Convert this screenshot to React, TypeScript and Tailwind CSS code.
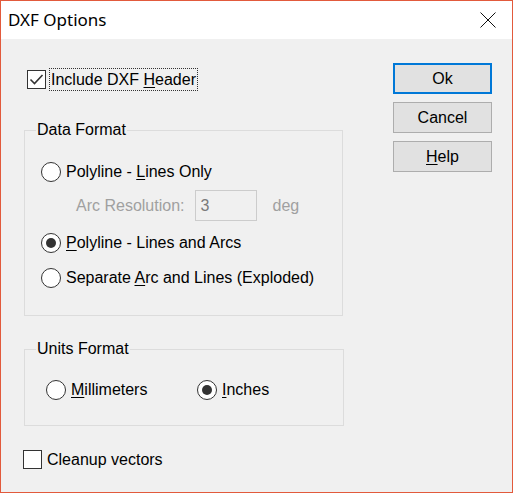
const font = { fontFamily: '"Liberation Sans", Arial, sans-serif' }

function CheckBox({ checked }: { checked: boolean }) {
  return (
    <span className="flex h-[19px] w-[19px] shrink-0 items-center justify-center border border-[#333333] bg-white">
      {checked && (
        <svg width="15" height="15" viewBox="0 0 15 15" aria-hidden>
          <path d="M1.5 7.5 L5.5 11.5 L13.5 3" fill="none" stroke="#333333" strokeWidth="1.6" />
        </svg>
      )}
    </span>
  )
}

function Radio({ checked }: { checked: boolean }) {
  return (
    <span className="flex h-[20px] w-[20px] shrink-0 items-center justify-center rounded-full border border-[#333333] bg-white">
      {checked && <span className="h-[10px] w-[10px] rounded-full bg-[#333333]" />}
    </span>
  )
}

function RadioRow({
  checked,
  children,
  className = '',
}: {
  checked: boolean
  children: React.ReactNode
  className?: string
}) {
  return (
    <div className={`flex h-[20px] items-center gap-[5px] ${className}`}>
      <Radio checked={checked} />
      <span className="leading-none">{children}</span>
    </div>
  )
}

function Btn({ children, primary }: { children: React.ReactNode; primary?: boolean }) {
  return (
    <button
      type="button"
      className={`flex h-[31px] w-[99px] items-center justify-center bg-[#e1e1e1] text-[16px] text-black ${
        primary ? 'border-2 border-[#0078d7]' : 'border border-[#adadad]'
      }`}
    >
      {children}
    </button>
  )
}

export default function App() {
  return (
    <div
      className="flex h-[493px] w-[513px] flex-col border border-[#e25a3c] text-[16px] text-black"
      style={font}
    >
      <header className="flex h-[38px] shrink-0 items-center justify-between bg-white pl-[7px] pr-[16px]">
        <span className="text-[17px]" style={{ fontFamily: '"Noto Sans", "Liberation Sans", sans-serif' }}>
          DXF Options
        </span>
        <svg width="16" height="16" viewBox="0 0 16 16" aria-hidden>
          <path d="M0.5 0.5 L15.5 15.5 M15.5 0.5 L0.5 15.5" stroke="#111111" strokeWidth="1" />
        </svg>
      </header>

      <div className="flex flex-1 bg-[#f0f0f0]">
        <div className="w-[392px] pl-[21px]">
          <div className="ml-[5px] mt-[29px] flex h-[23px] items-center gap-[3px]">
            <CheckBox checked />
            <span className="block h-[23px] border border-dotted border-[#333333] px-[1px] leading-[21px]">
              Include DXF <span className="underline underline-offset-2">H</span>eader
            </span>
          </div>

          <fieldset className="ml-[2px] mt-[30px] h-[195px] w-[319px] border border-[#dcdcdc]">
            <legend className="ml-[11px] px-[1px] leading-[18px]">Data Format</legend>
            <div className="pl-[16px]">
              <RadioRow checked={false} className="mt-[23px]">
                Polyline - <span className="underline underline-offset-2">L</span>ines Only
              </RadioRow>
              <div className="mt-[8px] flex h-[31px] items-center text-[#a0a0a0]">
                <span className="ml-[35px] leading-none">Arc Resolution:</span>
                <span className="ml-[10px] flex h-[31px] w-[62px] items-center border border-[#cccccc] bg-[#f0f0f0] pl-[5px] text-[#7a7a7a]">
                  3
                </span>
                <span className="ml-[16px] leading-none">deg</span>
              </div>
              <RadioRow checked className="mt-[12px]">
                <span className="underline underline-offset-2">P</span>olyline - Lines and Arcs
              </RadioRow>
              <RadioRow checked={false} className="mt-[15px]">
                Separate <span className="underline underline-offset-2">A</span>rc and Lines (Exploded)
              </RadioRow>
            </div>
          </fieldset>

          <fieldset className="ml-[2px] mt-[24px] h-[86px] w-[320px] border border-[#dcdcdc]">
            <legend className="ml-[11px] px-[1px] leading-[18px]">Units Format</legend>
            <div className="mt-[22px] flex pl-[21px]">
              <RadioRow checked={false} className="w-[151px]">
                <span className="underline underline-offset-2">M</span>illimeters
              </RadioRow>
              <RadioRow checked>
                <span className="underline underline-offset-2">I</span>nches
              </RadioRow>
            </div>
          </fieldset>

          <div className="ml-[1px] mt-[24px] flex items-center gap-[5px]">
            <CheckBox checked={false} />
            <span className="leading-none">Cleanup vectors</span>
          </div>
        </div>

        <div className="mt-[24px] flex flex-col gap-[8px]">
          <Btn primary>Ok</Btn>
          <Btn>Cancel</Btn>
          <Btn>
            <span>
              <span className="underline underline-offset-2">H</span>elp
            </span>
          </Btn>
        </div>
      </div>
    </div>
  )
}
